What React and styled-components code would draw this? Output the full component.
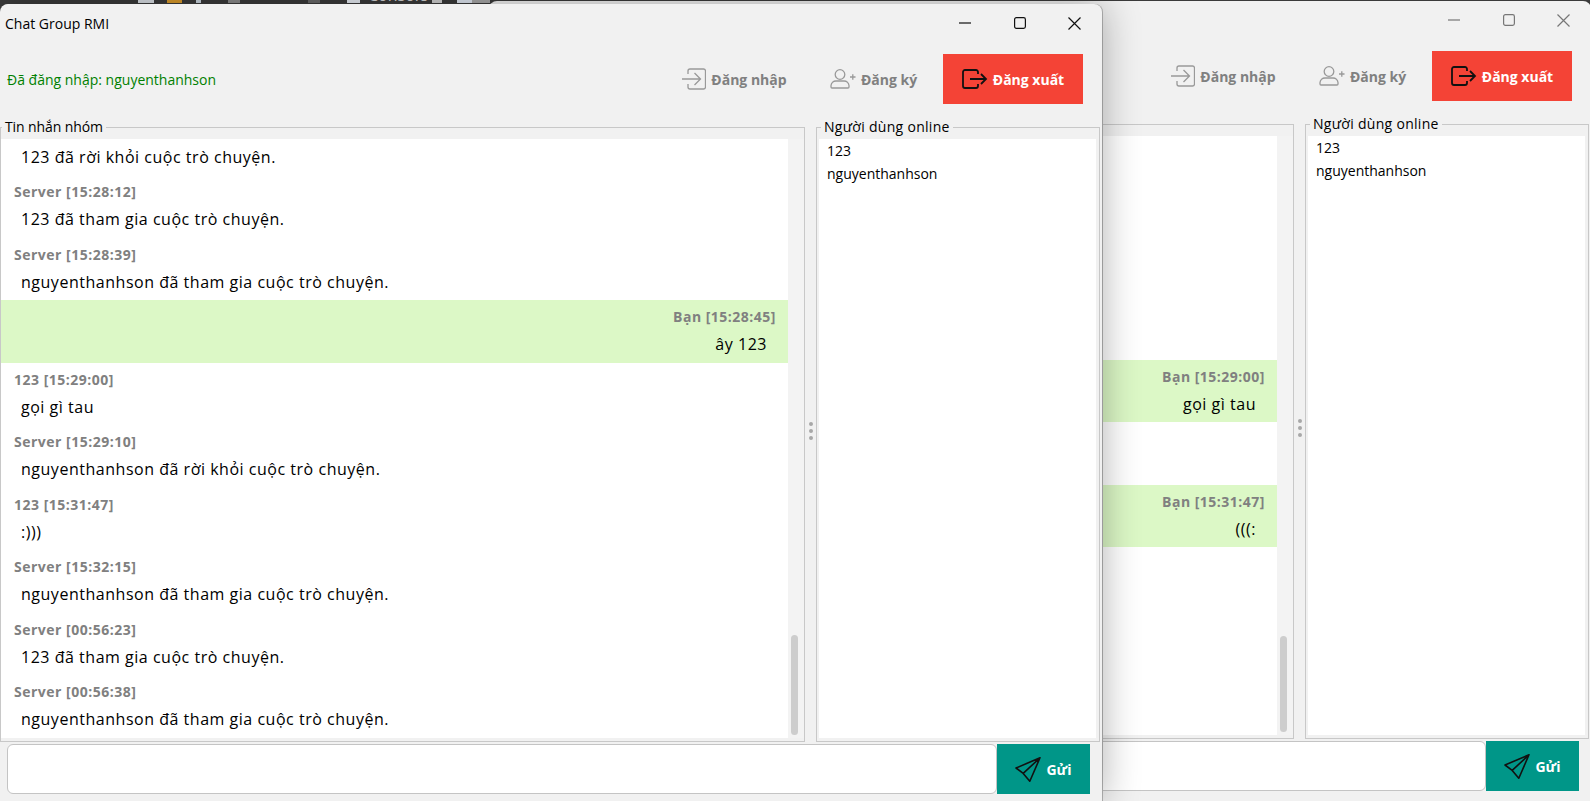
import React from 'react';
import styled, { createGlobalStyle } from 'styled-components';

const font = `"Open Sans", "Noto Sans", "Liberation Sans", sans-serif`;

const messages = [
    { from: '', time: '', text: '123 đã rời khỏi cuộc trò chuyện.', hideHead: true },
    { from: 'Server', time: '15:28:12', text: '123 đã tham gia cuộc trò chuyện.' },
    { from: 'Server', time: '15:28:39', text: 'nguyenthanhson đã tham gia cuộc trò chuyện.' },
    { from: 'nguyenthanhson', time: '15:28:45', text: 'ây 123' },
    { from: '123', time: '15:29:00', text: 'gọi gì tau' },
    { from: 'Server', time: '15:29:10', text: 'nguyenthanhson đã rời khỏi cuộc trò chuyện.' },
    { from: '123', time: '15:31:47', text: ':)))' },
    { from: 'Server', time: '15:32:15', text: 'nguyenthanhson đã tham gia cuộc trò chuyện.' },
    { from: 'Server', time: '00:56:23', text: '123 đã tham gia cuộc trò chuyện.' },
    { from: 'Server', time: '00:56:38', text: 'nguyenthanhson đã tham gia cuộc trò chuyện.' },
];

const taskItems = [
    { gap: 138, w: 16, c: '#d8dde2' },
    { gap: 13, w: 15, c: '#d99a2b' },
    { gap: 14, w: 5, c: '#c9d3dc' },
    { gap: 27, w: 12, c: '#8a8a8a' },
    { gap: 68, w: 12, c: '#6a6a6a' },
    { gap: 27, w: 13, c: '#e6ebf2' },
];

const taskItemsRight = [
    { gap: 22, w: 10, c: '#cfcfcf' },
    { gap: 15, w: 15, c: '#dfe6f0' },
    { gap: 0, w: 18, c: '#a8a8a8' },
];

function LoginIcon() {
    return (
        <svg width="24" height="22" viewBox="0 0 24 22" fill="none" stroke="#999" strokeWidth="1.3">
            <path d="M6 6V3a2 2 0 0 1 2-2h13.5a2 2 0 0 1 2 2v16a2 2 0 0 1-2 2H8a2 2 0 0 1-2-2v-3" />
            <path d="M0 11h18M12.5 5l6 6-6 6" />
        </svg>
    );
}

function RegisterIcon() {
    return (
        <svg width="26" height="20" viewBox="0 0 26 20" fill="none" stroke="#999" strokeWidth="1.3">
            <circle cx="10" cy="5.5" r="4.8" />
            <path d="M1 18v-1.5a5 5 0 0 1 5-4.5h8a5 5 0 0 1 5 4.5V18a1 1 0 0 1-1 1H2a1 1 0 0 1-1-1z" />
            <path d="M20 8h5.5M22.8 5.2v5.6" />
        </svg>
    );
}

function LogoutIcon() {
    return (
        <svg width="26" height="20" viewBox="0 0 26 20" fill="none" stroke="#111" strokeWidth="1.8">
            <path d="M16 5V3a2 2 0 0 0-2-2H3a2 2 0 0 0-2 2v14a2 2 0 0 0 2 2h11a2 2 0 0 0 2-2v-2" />
            <path d="M8 10h16M19 5l5 5-5 5" />
        </svg>
    );
}

function SendIcon() {
    return (
        <svg width="26" height="25" viewBox="0 0 26 25" fill="none" stroke="#111" strokeWidth="1.6" strokeLinejoin="round">
            <path d="M25 .8 1 11l7.2 5.4L14.8 24.2zM25 .8 8.2 16.4" />
        </svg>
    );
}

function WindowControls({ active }) {
    const stroke = active ? '#111' : '#777';
    return (
        <Controls>
            <ControlBox>
                <svg width="12" height="12" viewBox="0 0 12 12" stroke={stroke} strokeWidth="1.2"><path d="M0 6h12" /></svg>
            </ControlBox>
            <ControlBox>
                <svg width="12" height="12" viewBox="0 0 12 12" fill="none" stroke={stroke} strokeWidth="1.2"><rect x=".6" y=".6" width="10.8" height="10.8" rx="1.8" /></svg>
            </ControlBox>
            <ControlBox>
                <svg width="13" height="13" viewBox="0 0 13 13" stroke={stroke} strokeWidth="1.2"><path d="M.5.5l12 12M12.5.5l-12 12" /></svg>
            </ControlBox>
        </Controls>
    );
}

function ChatWindow({ user, back, thumb }) {
    return (
        <Win $back={back}>
            <TitleBar>
                <Title>Chat Group RMI</Title>
                <WindowControls active={!back} />
            </TitleBar>
            <Toolbar>
                <Status>Đã đăng nhập: {user}</Status>
                <ToolButton><LoginIcon />Đăng nhập</ToolButton>
                <ToolButton><RegisterIcon />Đăng ký</ToolButton>
                <ToolButton $danger><LogoutIcon />Đăng xuất</ToolButton>
            </Toolbar>
            <Body>
                <GroupBox $width={805}>
                    <Legend>Tin nhắn nhóm</Legend>
                    <MessageList>
                        {messages.map((m, i) => {
                            const mine = m.from === user;
                            return (
                                <Row key={i} $mine={mine}>
                                    <RowHead>{m.hideHead ? '' : `${mine ? 'Bạn' : m.from} [${m.time}]`}</RowHead>
                                    <RowText $mine={mine}>{m.text}</RowText>
                                </Row>
                            );
                        })}
                    </MessageList>
                    <Track><Thumb $height={thumb} /></Track>
                </GroupBox>
                <Splitter><Dot /><Dot /><Dot /></Splitter>
                <GroupBox $width={284} $inset>
                    <Legend $inset>Người dùng online</Legend>
                    <UserList>
                        <UserItem>123</UserItem>
                        <UserItem>nguyenthanhson</UserItem>
                    </UserList>
                </GroupBox>
            </Body>
            <Footer>
                <Input />
                <SendButton><SendIcon />Gửi</SendButton>
            </Footer>
        </Win>
    );
}

export default function App() {
    return (
        <Desktop>
            <GlobalStyle />
            <Taskbar>
                {taskItems.map((t, i) => <TaskIcon key={i} $gap={t.gap} $w={t.w} $c={t.c} />)}
                <TaskText>Console</TaskText>
                {taskItemsRight.map((t, i) => <TaskIcon key={i} $gap={t.gap} $w={t.w} $c={t.c} />)}
            </Taskbar>
            <BackSlot><ChatWindow user="123" back thumb={96} /></BackSlot>
            <FrontSlot><ChatWindow user="nguyenthanhson" thumb={100} /></FrontSlot>
        </Desktop>
    );
}

const GlobalStyle = createGlobalStyle`
    html, body { margin: 0; padding: 0; height: 100%; overflow: hidden; }
    * { box-sizing: border-box; }
`;

const Desktop = styled.div`
    position: relative;
    width: 1590px;
    height: 801px;
    overflow: hidden;
    background: #3b3b3b;
    font-family: ${font};
`;
const Taskbar = styled.div`
    display: flex;
    height: 4px;
    overflow: hidden;
`;
const TaskIcon = styled.div`
    flex: none;
    margin-left: ${p => p.$gap}px;
    width: ${p => p.$w}px;
    height: 3px;
    background: ${p => p.$c};
`;
const TaskText = styled.div`
    flex: none;
    width: 42px;
    margin: -14px 0 0 8px;
    font-size: 16px;
    line-height: 18px;
    color: #d5d5d5;
`;
const BackSlot = styled.div`
    position: absolute;
    left: 489px;
    top: 1px;
`;
const FrontSlot = styled.div`
    position: absolute;
    left: 0;
    top: 4px;
`;
const Win = styled.div`
    width: 1102px;
    height: ${p => (p.$back ? 800 : 797)}px;
    background: #f1f1f1;
    border-radius: 8px 8px 0 0;
    box-shadow: ${p => (p.$back ? 'none' : '0 0 38px rgba(0, 0, 0, 0.32), 1px 0 0 #b8b8b8')};
    color: #000;
`;
const TitleBar = styled.div`
    display: flex;
    align-items: flex-start;
    justify-content: space-between;
    height: 50px;
`;
const Title = styled.div`
    margin: 10px 0 0 5px;
    font-size: 14px;
    line-height: 20px;
`;
const Controls = styled.div`
    display: flex;
`;
const ControlBox = styled.div`
    display: flex;
    align-items: center;
    justify-content: center;
    width: 55px;
    height: 38px;
`;
const Toolbar = styled.div`
    display: flex;
    align-items: center;
    height: 50px;
    padding-right: 19px;
`;
const Status = styled.div`
    flex: 1;
    padding-left: 7px;
    font-size: 14px;
    color: #008000;
`;
const ToolButton = styled.div`
    display: flex;
    align-items: center;
    justify-content: center;
    gap: 5px;
    width: ${p => (p.$danger ? 140 : 139)}px;
    height: 50px;
    font-size: 14px;
    font-weight: 700;
    color: ${p => (p.$danger ? '#fff' : '#808080')};
    background: ${p => (p.$danger ? '#f44336' : 'transparent')};
`;
const Body = styled.div`
    display: flex;
    height: 624px;
    margin-top: 14px;
`;
const GroupBox = styled.fieldset`
    display: flex;
    flex: none;
    width: ${p => p.$width}px;
    min-width: 0;
    margin: 0;
    padding: ${p => (p.$inset ? '0 3px 3px 2px' : '0 0 3px 0')};
    border: 1px solid #c8c8c8;
`;
const Legend = styled.legend`
    padding: 0 3px;
    margin-left: ${p => (p.$inset ? 2 : 1)}px;
    font-size: 14px;
    line-height: 18px;
    letter-spacing: ${p => (p.$inset ? 0.3 : -0.1)}px;
`;
const MessageList = styled.div`
    display: flex;
    flex: 1;
    flex-direction: column;
    justify-content: flex-end;
    height: 599px;
    margin-top: 3px;
    padding-bottom: 0.5px;
    overflow: hidden;
    background: #fff;
`;
const Row = styled.div`
    flex: none;
    height: 62.5px;
    padding-top: 7px;
    background: ${p => (p.$mine ? '#dcf8c6' : 'transparent')};
    text-align: ${p => (p.$mine ? 'right' : 'left')};
`;
const RowHead = styled.div`
    height: 20px;
    padding: 0 12px 0 13px;
    font-size: 14px;
    font-weight: 700;
    line-height: 20px;
    letter-spacing: 0.5px;
    color: #808080;
`;
const RowText = styled.div`
    margin-top: 7px;
    padding: 0 21px 0 20px;
    font-size: 16px;
    line-height: 20px;
    letter-spacing: 0.52px;
    direction: ${p => (p.$mine ? 'rtl' : 'ltr')};
`;
const Track = styled.div`
    display: flex;
    flex: none;
    flex-direction: column;
    justify-content: flex-end;
    align-items: flex-start;
    width: 16px;
    height: 599px;
    margin-top: 3px;
    padding: 0 0 3px 3px;
    background: #f3f3f3;
`;
const Thumb = styled.div`
    width: 7px;
    height: ${p => p.$height}px;
    border-radius: 4px;
    background: #cdcdcd;
`;
const Splitter = styled.div`
    display: flex;
    flex: none;
    flex-direction: column;
    align-items: center;
    justify-content: center;
    gap: 3px;
    width: 11px;
    padding-top: 2px;
`;
const Dot = styled.div`
    width: 4px;
    height: 4px;
    border-radius: 50%;
    background: #a8a8a8;
`;
const UserList = styled.div`
    flex: 1;
    height: 599px;
    margin-top: 3px;
    padding: 0 8px;
    background: #fff;
`;
const UserItem = styled.div`
    height: 23px;
    font-size: 14px;
    line-height: 23px;
`;
const Footer = styled.div`
    display: flex;
    height: 50px;
    margin-top: 2px;
    padding: 0 12px 0 7px;
`;
const Input = styled.div`
    flex: 1;
    border: 1px solid #c4c4c4;
    border-radius: 6px;
    background: #fff;
`;
const SendButton = styled.div`
    display: flex;
    align-items: center;
    justify-content: center;
    gap: 5px;
    width: 93px;
    font-size: 14px;
    font-weight: 700;
    color: #fff;
    background: #009688;
`;
